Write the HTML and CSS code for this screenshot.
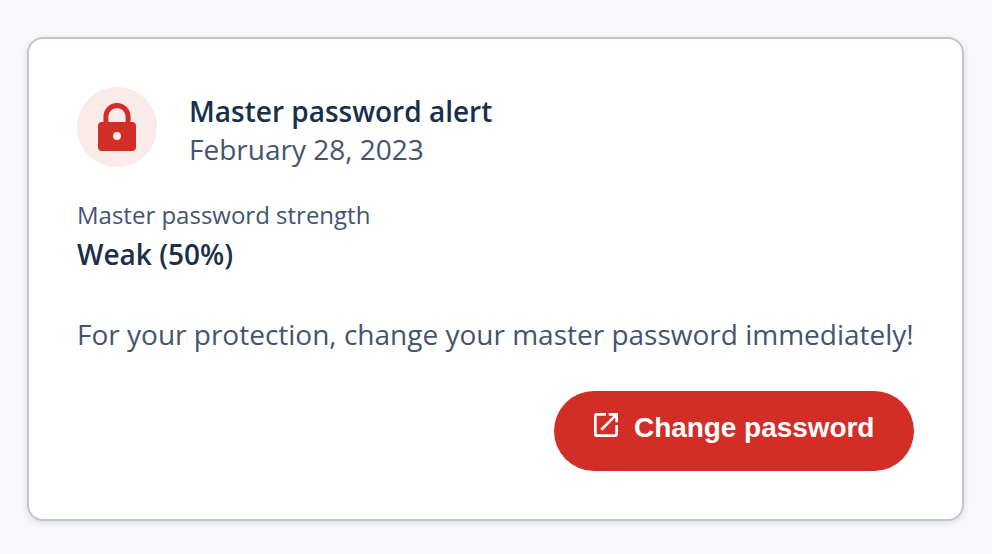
FILE: index.html
```html
<!DOCTYPE html>
<html lang="en">
<head>
<meta charset="utf-8">
<title>Master password alert</title>
<link rel="stylesheet" href="styles.css">
</head>
<body>
<main class="card">
  <header class="head">
    <div class="badge">
      <svg width="80" height="80" viewBox="0 0 80 80"><path d="M28.900 37V29.500a11.100 11.100 0 0 1 22.200 0V37" transform="translate(0 0)" fill="none" stroke="#d32d27" stroke-width="5"/><rect x="21" y="35" width="38" height="29" rx="4" fill="#d32d27"/><circle cx="40" cy="49" r="4" fill="#fbeaea"/></svg>
    </div>
    <div>
      <h1 class="title">Master password alert</h1>
      <p class="date">February 28, 2023</p>
    </div>
  </header>
  <p class="label">Master password strength</p>
  <p class="strength">Weak (50%)</p>
  <p class="message">For your protection, change your master password immediately!</p>
  <a class="button" href="#">
    <svg class="open" width="32" height="32" viewBox="0 0 24 24" fill="#fff"><path d="M19 19H5V5h7V3H5a2 2 0 0 0-2 2v14a2 2 0 0 0 2 2h14c1.100 0 2-.9 2-2v-7h-2v7zM14 3v2h3.590l-9.830 9.830 1.410 1.410L19 6.410V10h2V3h-7z"/></svg>
    <span>Change password</span>
  </a>
</main>
</body>
</html>
```
FILE: styles.css
```css
* { box-sizing: border-box; }
body {
  margin: 0;
  height: 554px;
  padding: 37px 28px 0 27px;
  background: #f8f8fa;
  font-family: "Open Sans", sans-serif;
  color: #43556e;
}
.card {
  display: flex;
  flex-direction: column;
  height: 484px;
  padding: 48px;
  border: 2px solid #bec6cf;
  border-radius: 16px;
  background: #fff;
  box-shadow: 0 2px 6px rgba(30, 45, 70, .12);
}
.head { display: flex; gap: 32px; height: 80px; }
.badge { width: 80px; height: 80px; border-radius: 50%; background: #fbeaea; }
h1, p { margin: 0; white-space: nowrap; }
.title { margin-top: 5px; font-size: 28px; line-height: 39px; font-weight: 600; color: #1a2f4b; }
.date { font-size: 28px; line-height: 36px; }
.label { margin-top: 31px; font-size: 24px; line-height: 33px; }
.strength { margin-top: 3px; font-size: 28px; line-height: 40px; font-weight: 600; color: #1a2f4b; }
.message { margin-top: 40px; font-size: 28px; line-height: 40px; }
.button {
  display: flex;
  flex-shrink: 0;
  align-self: flex-end;
  gap: 12px;
  width: 360px;
  height: 80px;
  margin-top: 37px;
  padding: 18px 0 0 36px;
  border-radius: 40px;
  background: #d32d27;
  color: #fff;
  font: bold 28px/38px "Liberation Sans", sans-serif;
  letter-spacing: -0.05px;
  text-decoration: none;
  white-space: nowrap;
}
```
